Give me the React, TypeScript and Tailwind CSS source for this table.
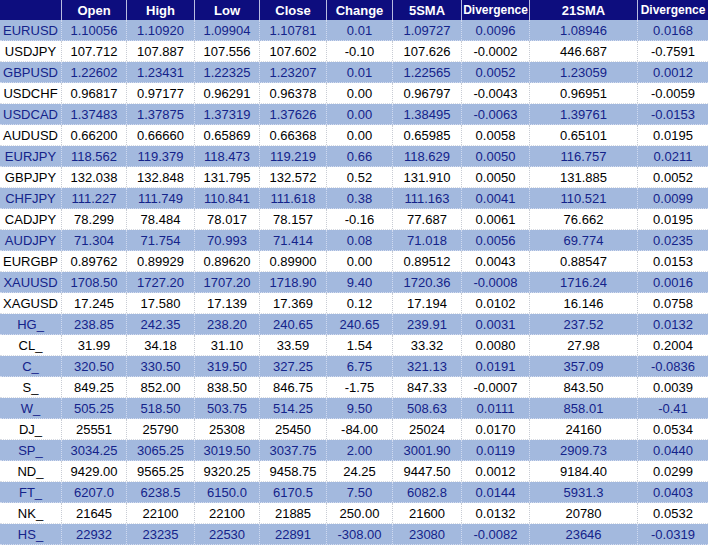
import React from "react";

const rows: string[][] = [
  ["EURUSD", "1.10056", "1.10920", "1.09904", "1.10781", "0.01", "1.09727", "0.0096", "1.08946", "0.0168"],
  ["USDJPY", "107.712", "107.887", "107.556", "107.602", "-0.10", "107.626", "-0.0002", "446.687", "-0.7591"],
  ["GBPUSD", "1.22602", "1.23431", "1.22325", "1.23207", "0.01", "1.22565", "0.0052", "1.23059", "0.0012"],
  ["USDCHF", "0.96817", "0.97177", "0.96291", "0.96378", "0.00", "0.96797", "-0.0043", "0.96951", "-0.0059"],
  ["USDCAD", "1.37483", "1.37875", "1.37319", "1.37626", "0.00", "1.38495", "-0.0063", "1.39761", "-0.0153"],
  ["AUDUSD", "0.66200", "0.66660", "0.65869", "0.66368", "0.00", "0.65985", "0.0058", "0.65101", "0.0195"],
  ["EURJPY", "118.562", "119.379", "118.473", "119.219", "0.66", "118.629", "0.0050", "116.757", "0.0211"],
  ["GBPJPY", "132.038", "132.848", "131.795", "132.572", "0.52", "131.910", "0.0050", "131.885", "0.0052"],
  ["CHFJPY", "111.227", "111.749", "110.841", "111.618", "0.38", "111.163", "0.0041", "110.521", "0.0099"],
  ["CADJPY", "78.299", "78.484", "78.017", "78.157", "-0.16", "77.687", "0.0061", "76.662", "0.0195"],
  ["AUDJPY", "71.304", "71.754", "70.993", "71.414", "0.08", "71.018", "0.0056", "69.774", "0.0235"],
  ["EURGBP", "0.89762", "0.89929", "0.89620", "0.89900", "0.00", "0.89512", "0.0043", "0.88547", "0.0153"],
  ["XAUUSD", "1708.50", "1727.20", "1707.20", "1718.90", "9.40", "1720.36", "-0.0008", "1716.24", "0.0016"],
  ["XAGUSD", "17.245", "17.580", "17.139", "17.369", "0.12", "17.194", "0.0102", "16.146", "0.0758"],
  ["HG_", "238.85", "242.35", "238.20", "240.65", "240.65", "239.91", "0.0031", "237.52", "0.0132"],
  ["CL_", "31.99", "34.18", "31.10", "33.59", "1.54", "33.32", "0.0080", "27.98", "0.2004"],
  ["C_", "320.50", "330.50", "319.50", "327.25", "6.75", "321.13", "0.0191", "357.09", "-0.0836"],
  ["S_", "849.25", "852.00", "838.50", "846.75", "-1.75", "847.33", "-0.0007", "843.50", "0.0039"],
  ["W_", "505.25", "518.50", "503.75", "514.25", "9.50", "508.63", "0.0111", "858.01", "-0.41"],
  ["DJ_", "25551", "25790", "25308", "25450", "-84.00", "25024", "0.0170", "24160", "0.0534"],
  ["SP_", "3034.25", "3065.25", "3019.50", "3037.75", "2.00", "3001.90", "0.0119", "2909.73", "0.0440"],
  ["ND_", "9429.00", "9565.25", "9320.25", "9458.75", "24.25", "9447.50", "0.0012", "9184.40", "0.0299"],
  ["FT_", "6207.0", "6238.5", "6150.0", "6170.5", "7.50", "6082.8", "0.0144", "5931.3", "0.0403"],
  ["NK_", "21645", "22100", "22100", "21885", "250.00", "21600", "0.0132", "20780", "0.0532"],
  ["HS_", "22932", "23235", "22530", "22891", "-308.00", "23080", "-0.0082", "23646", "-0.0319"],
];

const headers = ["", "Open", "High", "Low", "Close", "Change", "5SMA", "Divergence", "21SMA", "Divergence"];

const cols = "grid grid-cols-[62px_65px_68px_65px_67px_66px_69px_68px_108px_70px]";

export default function App() {
  return (
    <div
      className="w-[708px] h-[545px] overflow-hidden bg-white"
      style={{ fontFamily: '"Liberation Sans", Arial, sans-serif' }}
    >
      <div className={`${cols} h-[20px] bg-[#0d0d7e]`}>
        {headers.map((h, i) => (
          <div
            key={i}
            className={`flex items-center justify-center font-bold text-white leading-none ${
              i < headers.length - 1 ? "border-r border-[#b8bce0]" : ""
            } ${h === "Divergence" ? "text-[12px]" : "text-[13px]"}`}
          >
            {h}
          </div>
        ))}
      </div>
      {rows.map((r, ri) => {
        const blue = ri % 2 === 0;
        return (
          <div
            key={ri}
            className={`${cols} h-[21px] border-b border-dotted ${
              blue ? "bg-[#a3b9de] text-[#14238a] border-[#d4dcef]" : "bg-white text-black border-[#d8dce4]"
            }`}
          >
            {r.map((c, ci) => (
              <div
                key={ci}
                className={`flex items-center justify-center text-[13px] leading-none ${
                  ci < r.length - 1
                    ? blue
                      ? "border-r border-dotted border-[#d0daf0]"
                      : "border-r border-dotted border-[#c8ccd4]"
                    : ""
                }`}
              >
                {c}
              </div>
            ))}
          </div>
        );
      })}
    </div>
  );
}
